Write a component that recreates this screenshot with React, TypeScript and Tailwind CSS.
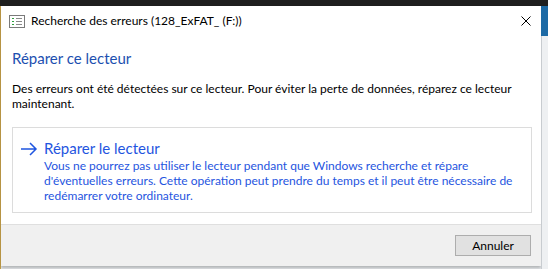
import React from "react";

function ChkdskIcon() {
  return (
    <svg width="16" height="13" viewBox="0 0 16 13" className="shrink-0">
      <rect x="0.5" y="0.5" width="15" height="12" fill="#ffffff" stroke="#7a7a7a" />
      <rect x="3" y="3" width="2" height="1" fill="#2e9e3e" />
      <rect x="3" y="6" width="2" height="1" fill="#2e9e3e" />
      <rect x="3" y="9" width="2" height="1" fill="#2e9e3e" />
      <rect x="7" y="3" width="6" height="1" fill="#8a8a8a" />
      <rect x="7" y="6" width="6" height="1" fill="#8a8a8a" />
      <rect x="7" y="9" width="6" height="1" fill="#8a8a8a" />
    </svg>
  );
}

function CloseIcon() {
  return (
    <svg width="10" height="10" viewBox="0 0 10 10">
      <path d="M0.5 0.5 L9.5 9.5 M9.5 0.5 L0.5 9.5" stroke="#000000" strokeWidth="1" />
    </svg>
  );
}

function ArrowIcon() {
  return (
    <svg width="18" height="14" viewBox="0 0 18 14">
      <path d="M1 7 H16 M10 1 L16 7 L10 13" stroke="#1f55e0" strokeWidth="1.5" fill="none" />
    </svg>
  );
}

export default function App() {
  const font = { fontFamily: 'Lato, "Noto Sans", sans-serif' };
  return (
    <div className="w-[548px] h-[269px] bg-[#e9ecef] flex flex-col overflow-hidden" style={font}>
      <div className="h-[6px] bg-[#1f1f1f]" />
      <div className="flex flex-1">
        <div className="w-[1px] bg-[#c9a34a]" />
        <div className="w-[540px] h-[260px] bg-white flex flex-col shadow-[0_2px_3px_rgba(0,0,0,0.25)]">
          {/* title bar */}
          <div className="h-[30px] flex items-center pl-[8px] pr-[10px]">
            <ChkdskIcon />
            <span className="ml-[6px] text-[12px] text-black leading-none whitespace-nowrap">Recherche des erreurs (128_ExFAT_ (F:))</span>
            <div className="ml-auto"><CloseIcon /></div>
          </div>
          {/* content */}
          <div className="flex-1 pl-[11px] pr-[9px] pt-[12px] whitespace-nowrap">
            <div className="text-[15px] leading-[20px] text-[#1c4fb0]">Réparer ce lecteur</div>
            <p className="mt-[13px] text-[12px] leading-[15px] text-black">
              Des erreurs ont été détectées sur ce lecteur. Pour éviter la perte de données, réparez ce lecteur
              <br />
              maintenant.
            </p>
            <div className="mt-[16px] h-[86px] border border-[#dcdcdc] flex pl-[7px] pt-[10px]">
              <div className="pt-[4px]"><ArrowIcon /></div>
              <div className="ml-[6px] text-[#1f55e0]">
                <div className="text-[15px] leading-[20px]">Réparer le lecteur</div>
                <div className="text-[12px] leading-[15px]">
                  Vous ne pourrez pas utiliser le lecteur pendant que Windows recherche et répare
                  <br />
                  d'éventuelles erreurs. Cette opération peut prendre du temps et il peut être nécessaire de
                  <br />
                  redémarrer votre ordinateur.
                </div>
              </div>
            </div>
          </div>
          {/* footer */}
          <div className="h-[42px] bg-[#f0f0f0] border-t border-[#dfdfdf] flex items-center justify-end pr-[10px]">
            <button className="w-[76px] h-[21px] bg-[#e1e1e1] border border-[#adadad] text-[12px] text-black leading-none">
              Annuler
            </button>
          </div>
        </div>
        <div className="flex-1 flex flex-col">
          <div className="h-[30px] bg-[#1d6aa5]" />
          <div className="flex-1 bg-[#eef0f2] border-l border-[#c8ccd0]" />
        </div>
      </div>
    </div>
  );
}
